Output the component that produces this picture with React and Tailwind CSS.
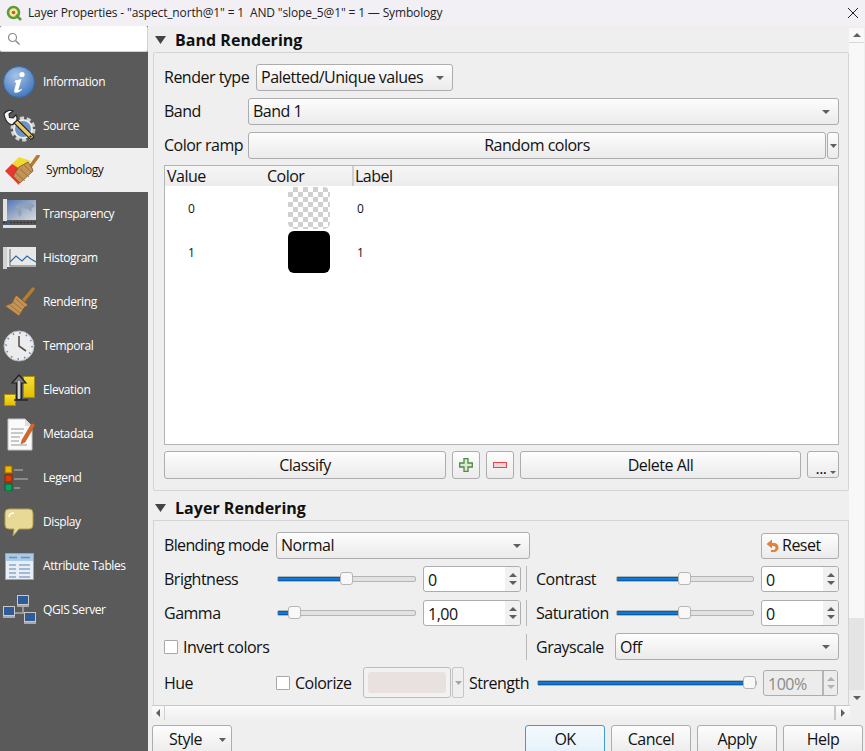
import React from "react";

const btn = "bg-linear-to-b from-[#fdfdfd] to-[#ebebeb] border border-[#adadad] rounded-[3px]";

const Caret = ({ className = "" }) => (
  <svg width="8" height="4" viewBox="0 0 9 5" preserveAspectRatio="none" className={className}><path d="M0 0h9L4.5 5z" fill="#5f5f5f" /></svg>
);

const Combo = ({ w, text, className = "", textClass = "pb-[2px]" }) => (
  <div className={`${btn} ${w} h-[27px] shrink-0 flex items-center justify-between pl-[4px] pr-[8px] ${className}`}>
    <span className={textClass}>{text}</span>
    <Caret />
  </div>
);

const Push = ({ w, children, className = "" }) => (
  <div className={`${btn} ${w} shrink-0 flex items-center justify-center ${className}`}>{children}</div>
);

const Spin = ({ w, text, disabled = false }) => (
  <div className={`${w} h-[26px] shrink-0 flex rounded-[3px] border border-[#adadad] overflow-hidden ${disabled ? "bg-[#ececec] text-[#8a8a8a]" : "bg-white"}`}>
    <div className="flex-1 pl-[4px] leading-[26px]">{text}</div>
    <div className={`w-[15px] flex flex-col items-center justify-center gap-[4px] ${disabled ? "bg-[#ececec] border-l-2 border-[#b5b5b5]" : "bg-[#f1f1f1]"}`}>
      <svg width="8" height="4" viewBox="0 0 8 4"><path d="M0 4h8L4 0z" fill={disabled ? "#b0b0b0" : "#5f5f5f"} /></svg>
      <Caret className={`w-[8px] h-[4px] ${disabled ? "opacity-40" : ""}`} />
    </div>
  </div>
);

const Slider = ({ w, pct }) => (
  <div className={`${w} shrink-0 relative h-[16px] flex items-center`}>
    <div className="w-full h-[6px] rounded-[2px] border border-[#b5b5b5] bg-[#e2e2e2] overflow-hidden">
      <div className="h-full bg-[#0f78d4] border-y border-[#0a5da8]" style={{ width: `${pct}%` }} />
    </div>
    <div className="absolute top-[1px] w-[13px] h-[13px] rounded-[3px] border border-[#b5b5b5] bg-[#f8f8f8]" style={{ left: `calc(${pct}% - 7px)` }} />
  </div>
);

const Section = ({ title }) => (
  <div className="h-[24px] flex items-center pl-[2px] gap-[9px] text-[#101010]">
    <svg width="11" height="8" viewBox="0 0 11 8"><path d="M0 0h11L5.5 8z" fill="#444" /></svg>
    <span className="font-bold text-[16px] tracking-[0.03px]">{title}</span>
  </div>
);

const Check = ({ className = "" }) => (
  <span className={`w-[14px] h-[14px] shrink-0 bg-white border border-[#a8a8a8] rounded-[1px] ${className}`} />
);

const Vr = () => <div className="w-px h-[26px] bg-[#b8b8b8] shrink-0 mx-[5px]" />;

const I = {
  info: (
    <svg width="32" height="32" viewBox="0 0 32 32">
      <defs><radialGradient id="ib" cx="40%" cy="30%" r="75%"><stop offset="0" stopColor="#a6c4e8" /><stop offset="1" stopColor="#3f74ba" /></radialGradient></defs>
      <circle cx="16" cy="16" r="15.5" fill="url(#ib)" stroke="#3a6aa8" />
      <circle cx="19" cy="8.5" r="2.6" fill="#fff" />
      <path d="M12 14.5l6.5-1.5-3 10.5c0 1 1 .8 3-.8l.5.8c-2.5 2.6-4.5 3.5-6.5 3.2-1.3-.3-1.6-1.4-1.2-2.8l2-7.4c-.6 0-1.2.1-1.7.2z" fill="#fff" />
    </svg>
  ),
  source: (
    <svg width="34" height="34" viewBox="0 0 34 34">
      <circle cx="21" cy="20" r="10.5" fill="none" stroke="#d2d2d2" strokeWidth="4" strokeDasharray="4 2.6" />
      <circle cx="21" cy="20" r="9" fill="#6f94c4" stroke="#ececec" strokeWidth="2" />
      <path d="M2 5C4 1.500 8 .5 11 2l-4 3 .5 3.500L11 9l3-3c1.500 2.500 1 5.500-.5 7L10 16C6 15 3 11 2 5z" fill="#f4f4f4" stroke="#222" strokeWidth="1.100" />
      <path d="M12 14l3.500-3L31 26.500c.8 1 .5 2.200-.5 3s-2.200.8-3-.2z" fill="#e8c86a" stroke="#222" strokeWidth="1.100" />
      <circle cx="28.500" cy="27.500" r="1.100" fill="#222" />
    </svg>
  ),
  symbology: (
    <svg width="36" height="30" viewBox="0 0 36 30">
      <path d="M6 10L14 2l12 4-8 9z" fill="#f0d930" />
      <path d="M0 16l7-7 11 7-4 14z" fill="#e8372f" />
      <path d="M10 14l7 6-3 6z" fill="#3b5fb8" opacity=".8" />
      <path d="M25 12L33 1" stroke="#b87a2c" strokeWidth="3.5" strokeLinecap="round" />
      <path d="M14 12l9-5 4 6 1 3-13 12-7-7z" fill="#c49358" stroke="#7d5524" strokeWidth=".8" />
      <path d="M11 18l9 8M15 14l9 8M19 10l7 7" stroke="#8a6230" strokeWidth=".7" />
    </svg>
  ),
  transparency: (
    <svg width="33" height="30" viewBox="0 0 33 30">
      <defs><linearGradient id="tm" x1="0" y1="0" x2="1" y2="1"><stop offset="0" stopColor="#4f75b4" /><stop offset=".6" stopColor="#a9b6cb" /><stop offset="1" stopColor="#d6dade" /></linearGradient></defs>
      <rect x="3" y="1" width="30" height="20" fill="url(#tm)" />
      <path d="M12 7l6-2 3 2-3 3 1 5-3 3-2-6zM21 5l8-1 3 3-3 2-1 4-3-3-4-1z" fill="#8fa1bb" />
      <rect x="0" y="0" width="4" height="22" fill="#e2e2e2" />
      <path d="M0 23.500h33" stroke="#333" strokeWidth="1.600" strokeDasharray="2 1.400" />
      <rect x="4" y="22" width="2" height="4" fill="#2b5fb0" />
      <rect x="0" y="26" width="33" height="3" fill="#dedede" />
    </svg>
  ),
  histogram: (
    <svg width="33" height="22" viewBox="0 0 33 22">
      <rect x="0" y="0" width="33" height="20" fill="#e8e8e8" />
      <rect x="0" y="0" width="4" height="22" fill="#d2d2d2" />
      <path d="M7 2v17h26" stroke="#444" fill="none" strokeWidth=".8" />
      <path d="M7 15l6-6 6 5 5-5 4 3 5 3" stroke="#2f6aa5" fill="none" strokeWidth="1.1" />
    </svg>
  ),
  brush: (
    <svg width="30" height="30" viewBox="0 0 30 30">
      <path d="M19 13L28 2" stroke="#b87a2c" strokeWidth="3.5" strokeLinecap="round" />
      <path d="M11 8l12 10-4 3-5 8-14-10 7-3z" fill="#c49358" stroke="#7d5524" strokeWidth=".8" />
      <path d="M5 18l10 8M8 15l10 8M11 12l9 8" stroke="#8a6230" strokeWidth=".7" />
    </svg>
  ),
  clock: (
    <svg width="32" height="32" viewBox="0 0 32 32">
      <circle cx="16" cy="16" r="15" fill="#ececec" stroke="#bcbcbc" />
      <circle cx="16" cy="16" r="13" fill="none" stroke="#6d8fbf" strokeWidth="1.8" strokeDasharray="1.5 5.3" />
      <path d="M16 6v10l7 5" stroke="#555" strokeWidth="1.6" fill="none" />
    </svg>
  ),
  elevation: (
    <svg width="31" height="32" viewBox="0 0 31 32">
      <defs><linearGradient id="ey" x1="0" y1="0" x2="0" y2="1"><stop offset="0" stopColor="#f6e23a" /><stop offset="1" stopColor="#e0bc00" /></linearGradient></defs>
      <rect x="19.5" y="2.5" width="11" height="21" fill="url(#ey)" stroke="#a88c10" />
      <rect x=".5" y="20.5" width="11" height="11" fill="url(#ey)" stroke="#a88c10" />
      <path d="M8 9l7-8 7 8h-4.500v16h-5V9z" fill="#777" stroke="#222" strokeWidth="1.200" />
      <path d="M15 7v18" stroke="#f0f0f0" strokeWidth="1.500" />
      <path d="M10 26h14" stroke="#222" strokeWidth="1.400" />
    </svg>
  ),
  meta: (
    <svg width="29" height="33" viewBox="0 0 29 33">
      <path d="M1 1h17l7 7v24H1z" fill="#fafafa" stroke="#c4c4c4" />
      <path d="M18 1v7h7z" fill="#ddd" />
      <path d="M4 11h13M4 15h12M4 19h9M4 23h8M4 27h16" stroke="#999" strokeWidth="1" />
      <path d="M15 22L25 5l3 2-10 17-4 2z" fill="#d9652b" stroke="#a2481a" strokeWidth=".5" />
    </svg>
  ),
  legend: (
    <svg width="24" height="26" viewBox="0 0 24 26">
      <rect x="1" y="1" width="7" height="7" fill="#f5b400" stroke="#8a6a00" />
      <rect x="1" y="10" width="7" height="7" fill="#e03a00" stroke="#8a2400" />
      <rect x="1" y="19" width="7" height="7" fill="#0aa35a" stroke="#0b5a38" />
      <path d="M10 5h9M10 14h14M10 23h6" stroke="#8a8a8a" strokeWidth="2" />
    </svg>
  ),
  display: (
    <svg width="30" height="29" viewBox="0 0 30 29">
      <path d="M5 1h20a4 4 0 0 1 4 4v12a4 4 0 0 1-4 4H15l-6 7 1-7H5a4 4 0 0 1-4-4V5a4 4 0 0 1 4-4z" fill="#e8da96" stroke="#b49c4c" />
      <path d="M5 9c0-3 1.5-4 5-4" stroke="#fff" strokeWidth="1.5" fill="none" />
    </svg>
  ),
  table: (
    <svg width="29" height="27" viewBox="0 0 29 27">
      <rect x=".5" y=".5" width="28" height="26" fill="#e8eef5" stroke="#8fa6c2" />
      <rect x="1" y="1" width="27" height="7" fill="#a9cbe8" />
      <path d="M4 4.500h8M16 4.500h9" stroke="#6d8fb5" strokeWidth="1.5" />
      <path d="M4 12h7M4 16h7M4 20h7M4 24h7M14 12h11M14 16h11M14 20h11M14 24h11" stroke="#8aa6c8" strokeWidth="1.3" />
    </svg>
  ),
  server: (
    <svg width="33" height="30" viewBox="0 0 33 30">
      <path d="M20 11v7M10 18h14" stroke="#aaa" strokeWidth="1.5" />
      <rect x="14.5" y=".5" width="11" height="9" fill="#2f5c98" stroke="#c8c8c8" />
      <rect x="14" y="10" width="12" height="2" fill="#aaa" />
      <rect x=".5" y="11.5" width="11" height="9" fill="#2f5c98" stroke="#c8c8c8" />
      <rect x="0" y="21" width="12" height="2" fill="#aaa" />
      <rect x="21.5" y="17.5" width="11" height="9" fill="#2f5c98" stroke="#c8c8c8" />
      <rect x="21" y="27" width="12" height="2" fill="#aaa" />
    </svg>
  ),
};

const nav = [
  ["Information", I.info, "pl-[3px]"],
  ["Source", I.source, "pl-[2px]"],
  ["Symbology", I.symbology, "pl-[5px]", true],
  ["Transparency", I.transparency, "pl-[3px]"],
  ["Histogram", I.histogram, "pl-[3px]"],
  ["Rendering", I.brush, "pl-[5px]"],
  ["Temporal", I.clock, "pl-[3px]"],
  ["Elevation", I.elevation, "pl-[4px]"],
  ["Metadata", I.meta, "pl-[7px]"],
  ["Legend", I.legend, "pl-[4px]"],
  ["Display", I.display, "pl-[4px]"],
  ["Attribute Tables", I.table, "pl-[5px]"],
  ["QGIS Server", I.server, "pl-[3px]"],
];

const Checker = () => (
  <div className="w-[42px] h-[42px] rounded-[6px] bg-[repeating-conic-gradient(#d0d0d0_0_25%,#ffffff_0_50%)] bg-[length:10px_10px]" />
);

export default function App() {
  return (
    <div className="w-[865px] h-[751px] overflow-hidden bg-[#efefef] flex flex-col text-[16px] leading-[20px] text-[#111] font-['Open_Sans','Noto_Sans',sans-serif] tracking-[-0.5px]">
      {/* title bar */}
      <div className="h-[26px] shrink-0 bg-[#f3f0f5] flex items-center pl-[6px] pr-[4px] text-[12px] text-[#222] tracking-[-0.15px]">
        <svg width="16" height="16" viewBox="0 0 16 16" className="mr-[6px]">
          <circle cx="7.5" cy="7.5" r="5.5" fill="#f3e9a0" stroke="#5f9b35" strokeWidth="2.6" />
          <circle cx="7.5" cy="7.5" r="1.8" fill="#d8552b" />
          <path d="M10 10l5 5" stroke="#5f9b35" strokeWidth="2.6" />
        </svg>
        <span className="flex-1 whitespace-pre">{'Layer Properties - "aspect_north@1" = 1  AND "slope_5@1" = 1 — Symbology'}</span>
        <svg width="12" height="12" viewBox="0 0 12 12" className="mr-[2px]"><path d="M1 1l10 10M11 1L1 11" stroke="#222" strokeWidth="1" /></svg>
      </div>

      <div className="flex-1 min-h-0 flex">
        {/* sidebar */}
        <div className="w-[148px] shrink-0 flex flex-col bg-[#5a5a5a] relative">
          <div className="h-[26px] bg-white rounded-[2px] border-b border-r border-[#d0d0d0] flex items-center pl-[7px] shrink-0">
            <svg width="13" height="13" viewBox="0 0 13 13"><circle cx="5.5" cy="5.5" r="4" fill="none" stroke="#8a8a8a" strokeWidth="1.2" /><path d="M8.5 8.500l4 4" stroke="#8a8a8a" strokeWidth="1.5" /></svg>
          </div>
          <div className="h-[8px] shrink-0" />
          {nav.map(([label, icon, pad, active]) => (
            <div key={label} className={`h-[44px] shrink-0 flex items-center text-[12px] tracking-[-0.4px] ${active ? "bg-[#efefef] text-[#111]" : "text-white"}`}>
              <div className={`${active ? "w-[46px]" : "w-[43px]"} ${pad} h-full shrink-0 flex items-center overflow-visible`}>{icon}</div>
              <span>{label}</span>
            </div>
          ))}
        </div>

        {/* main */}
        <div className="flex-1 min-w-0 flex flex-col pl-[4px]">
          <div className="h-[679px] shrink-0 flex relative">
            <div className="w-[697px] pl-px shrink-0 flex flex-col">
              <div className="h-[26px] shrink-0 flex items-end"><Section title="Band Rendering" /></div>
              <div className="h-[439px] shrink-0 border border-[#d4d4d4] rounded-[2px] pl-[10px] pr-[9px] pt-[11px] flex flex-col gap-[7px]">
                <div className="flex items-center h-[27px]">
                  <span className="w-[92px] shrink-0 pb-[2px]">Render type</span>
                  <Combo w="w-[197px]" text="Paletted/Unique values" />
                </div>
                <div className="flex items-center h-[27px]">
                  <span className="w-[84px] shrink-0 pb-[2px]">Band</span>
                  <Combo w="flex-1" text="Band 1" />
                </div>
                <div className="flex items-center h-[27px]">
                  <span className="w-[84px] shrink-0 pb-[2px]">Color ramp</span>
                  <Push w="flex-1" className="h-[27px] pb-[2px]">Random colors</Push>
                  <div className={`${btn} w-[12px] ml-px h-[27px] shrink-0 flex items-center justify-center`}><Caret className="w-[7px]" /></div>
                </div>
                <div className="h-[280px] -mt-px border border-[#b4b4b4] bg-white flex flex-col">
                  <div className="h-[20px] shrink-0 bg-linear-to-b from-[#f6f6f6] to-[#ececec] flex items-center">
                    <span className="w-[100px] pl-[2px] shrink-0">Value</span>
                    <span className="w-[87px] pl-[2px] shrink-0">Color</span>
                    <span className="border-l-2 border-[#d0d0d0] pl-[1px] h-full">Label</span>
                  </div>
                  {[["0", false], ["1", true]].map(([v, filled]) => (
                    <div key={v} className="h-[44px] shrink-0 flex items-center text-[12px] tracking-normal">
                      <span className="w-[123px] shrink-0 pl-[23px] pt-[2px]">{v}</span>
                      {filled ? <div className="w-[42px] h-[42px] rounded-[6px] bg-black" /> : <Checker />}
                      <span className="pl-[27px] pt-[2px]">{v}</span>
                    </div>
                  ))}
                </div>
                <div className="flex h-[28px] -mt-px gap-[6px]">
                  <Push w="w-[282px]">Classify</Push>
                  <Push w="w-[28px]">
                    <svg width="14" height="14" viewBox="0 0 14 14"><path d="M5 .7h4v4.300h4.300v4H9v4.300H5V9H.7V5H5z" fill="#dcebd6" stroke="#4f8a45" strokeWidth="1.3" /></svg>
                  </Push>
                  <Push w="w-[28px]">
                    <svg width="14" height="6" viewBox="0 0 14 6"><rect x=".5" y=".5" width="13" height="5" fill="#f3d5d5" stroke="#e8434c" /></svg>
                  </Push>
                  <Push w="w-[281px]">Delete All</Push>
                  <div className={`${btn} w-[32px] h-[27px] shrink-0 relative flex items-end justify-center pb-[2px] leading-[14px]`}>
                    <span className="pr-[4px]">...</span>
                    <Caret className="absolute right-[2px] bottom-[3px] w-[6px] h-[3px]" />
                  </div>
                </div>
              </div>

              <div className="h-[29px] shrink-0 flex items-end"><Section title="Layer Rendering" /></div>
              <div className="flex-1 min-h-0 border-l border-t border-r border-[#d4d4d4] pl-[10px] pr-[9px] pt-[11px] flex flex-col">
                <div className="flex items-center h-[27px] justify-between">
                  <div className="flex items-center">
                    <span className="w-[112px] shrink-0 pb-[2px] tracking-[-0.65px]">Blending mode</span>
                    <Combo w="w-[254px]" text="Normal" />
                  </div>
                  <Push w="w-[78px]" className="h-[26px] gap-[3px] justify-start! pl-[4px]">
                    <svg width="13" height="13" viewBox="0 0 13 13"><path d="M6 .5L.5 5 6 9.500V7h1.500a2 2 0 0 1 0 4H5v2h3a4.500 4.500 0 0 0 0-9H6z" fill="#e0813d" /></svg>
                    <span className="pb-[2px]">Reset</span>
                  </Push>
                </div>

                <div className="flex items-center h-[26px] mt-[7px]">
                  <span className="w-[113px] shrink-0">Brightness</span>
                  <Slider w="w-[139px]" pct={50} />
                  <span className="w-[7px] shrink-0" />
                  <Spin w="w-[98px]" text="0" />
                  <Vr />
                  <span className="w-[84px] shrink-0 pl-[4px]">Contrast</span>
                  <Slider w="w-[138px]" pct={50} />
                  <span className="w-[7px] shrink-0" />
                  <Spin w="w-[78px]" text="0" />
                </div>

                <div className="flex items-center h-[26px] mt-[8px]">
                  <span className="w-[113px] shrink-0">Gamma</span>
                  <Slider w="w-[139px]" pct={13} />
                  <span className="w-[7px] shrink-0" />
                  <Spin w="w-[98px]" text="1,00" />
                  <Vr />
                  <span className="w-[84px] shrink-0 pl-[4px]">Saturation</span>
                  <Slider w="w-[138px]" pct={50} />
                  <span className="w-[7px] shrink-0" />
                  <Spin w="w-[78px]" text="0" />
                </div>

                <div className="flex items-center h-[27px] mt-[7px]">
                  <div className="w-[357px] shrink-0 flex items-center gap-[5px]">
                    <Check />
                    <span>Invert colors</span>
                  </div>
                  <Vr />
                  <span className="w-[83px] shrink-0 pl-[4px]">Grayscale</span>
                  <Combo w="w-[224px]" text="Off" textClass="" />
                </div>

                <div className="flex items-center h-[31px] mt-[7px]">
                  <span className="w-[112px] shrink-0">Hue</span>
                  <Check />
                  <span className="w-[73px] shrink-0 pl-[5px]">Colorize</span>
                  <div className="w-[88px] h-[31px] shrink-0 rounded-[3px] border border-[#bdbdbd] bg-[#f2f2f2] p-[4px]">
                    <div className="w-full h-full rounded-[3px] bg-[#e9e0e0]" />
                  </div>
                  <div className="w-[12px] h-[31px] shrink-0 ml-px rounded-[2px] border border-[#c6c6c6] flex items-center justify-center">
                    <Caret className="w-[7px] opacity-50" />
                  </div>
                  <span className="w-[73px] shrink-0 pl-[5px]">Strength</span>
                  <Slider w="w-[220px]" pct={97} />
                  <span className="w-[6px] shrink-0" />
                  <Spin w="w-[75px]" text="100%" disabled />
                </div>
              </div>
            </div>

            {/* vertical scrollbar */}
            <div className="w-[15px] shrink-0 mt-[2px] flex flex-col bg-[#e4e4e4]">
              <div className="h-[15px] shrink-0 bg-[#f8f8f8] border-b border-[#d8d8d8] flex items-center justify-center">
                <svg width="8" height="4" viewBox="0 0 8 4"><path d="M0 4h8L4 0z" fill="#5f5f5f" /></svg>
              </div>
              <div className="h-[575px] shrink-0 bg-[#f8f8f8]" />
              <div className="flex-1" />
              <div className="h-[15px] shrink-0 flex items-center justify-center bg-[#efefef]"><Caret className="w-[8px] h-[4px]" /></div>
            </div>
          </div>

          {/* horizontal scrollbar */}
          <div className="w-[698px] h-[15px] shrink-0 border-t border-[#c8c8c8] bg-linear-to-b from-[#fbfbfb] to-[#efefef] flex items-center justify-between">
            <div className="w-[13px] h-full flex items-center justify-center border-r border-[#d0d0d0]">
              <svg width="4" height="8" viewBox="0 0 4 8"><path d="M4 0v8L0 4z" fill="#5f5f5f" /></svg>
            </div>
            <div className="w-[16px] h-full flex items-center justify-center border-l-2 border-[#c8c8c8]">
              <svg width="4" height="8" viewBox="0 0 4 8"><path d="M0 0v8l4-4z" fill="#5f5f5f" /></svg>
            </div>
          </div>

          {/* footer */}
          <div className="flex-1 pt-[5px] flex">
            <div className={`${btn} w-[80px] h-[30px] shrink-0 flex items-center justify-between pl-[16px] pr-[5px]`}>
              <span className="pb-[2px]">Style</span>
              <Caret className="w-[7px] h-[4px]" />
            </div>
            <div className="ml-[293px] flex gap-[6px]">
              <div className="w-[80px] h-[30px] rounded-[3px] border border-[#3f9ad6] bg-linear-to-b from-[#f4fafe] to-[#e4f1fa] flex items-center justify-center pb-[2px]">OK</div>
              <Push w="w-[80px]" className="h-[30px] pb-[2px]">Cancel</Push>
              <Push w="w-[80px]" className="h-[30px] pb-[2px]">Apply</Push>
              <Push w="w-[80px]" className="h-[30px] pb-[2px]">Help</Push>
            </div>
          </div>
        </div>
      </div>
    </div>
  );
}
